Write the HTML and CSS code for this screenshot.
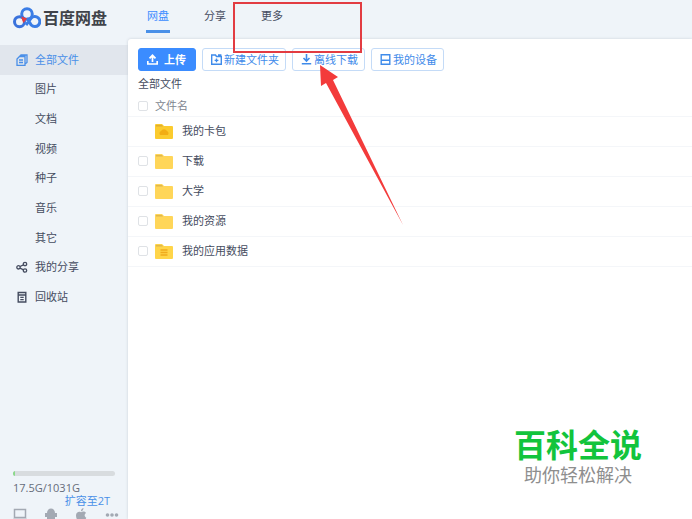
FILE: index.html
```html
<!DOCTYPE html>
<html lang="zh-CN">
<head>
    <meta charset="UTF-8">
    <title>百度网盘</title>
    <link rel="stylesheet" href="styles.css">
</head>
<body>
    <header class="topbar">
        <div class="brand">
            <svg class="brand-icon" viewBox="0 0 28 22" fill="none">
                <circle cx="14" cy="7" r="5.3" stroke="#3a7de6" stroke-width="3"/>
                <circle cx="6.5" cy="14.7" r="5" stroke="#3a72dc" stroke-width="3"/>
                <path d="M14 11L18.2 18A5 5 0 1 0 18 11.4L13 18" stroke="#3a7de6" stroke-width="3"/>
                <path d="M8.5 9.5L14 11.5L10.5 16C9.500 14 8.500 12 8.500 9.500Z" fill="#e63c42"/>
            </svg>
            <span>百度网盘</span>
        </div>
        <nav class="tabs">
            <a class="tab active" href="#">网盘</a>
            <a class="tab" href="#">分享</a>
            <a class="tab" href="#">更多</a>
        </nav>
    </header>

    <div class="layout">
        <aside class="sidebar">
            <nav class="menu">
                <a class="menu-item active" href="#">
                    <svg class="menu-icon" viewBox="0 0 12 12" fill="none" stroke="currentColor">
                        <path d="M3.500 2.500L5 1H11V8.500L9 10M3.500 2.500H9V11.300H1V5L3.500 2.500ZM3 6H7M3 8.500H7" stroke-width="1.300"/>
                    </svg>
                    <span>全部文件</span>
                </a>
                <a class="menu-item" href="#">图片</a>
                <a class="menu-item" href="#">文档</a>
                <a class="menu-item" href="#">视频</a>
                <a class="menu-item" href="#">种子</a>
                <a class="menu-item" href="#">音乐</a>
                <a class="menu-item" href="#">其它</a>
                <a class="menu-item" href="#">
                    <svg class="menu-icon" viewBox="0 0 12 12" fill="none" stroke="currentColor" stroke-width="1.300">
                        <circle cx="2.500" cy="6.300" r="1.700"/>
                        <circle cx="9" cy="3" r="1.700"/>
                        <circle cx="9" cy="9.500" r="1.700"/>
                        <path d="M4 5.500L7.500 3.800M4 7.200L7.500 8.800"/>
                    </svg>
                    <span>我的分享</span>
                </a>
                <a class="menu-item" href="#">
                    <svg class="menu-icon" viewBox="0 0 12 12" fill="none" stroke="currentColor" stroke-width="1.400">
                        <path d="M1.500 1.500H10.500M2.200 4H9.800V11H2.200ZM2.200 1.500V4M9.800 1.500V4M4.300 6.400H7.700M4.300 8.600H7.700"/>
                    </svg>
                    <span>回收站</span>
                </a>
            </nav>

            <div class="quota">
                <div class="quota-bar"><div class="quota-used"></div></div>
                <div class="quota-text">17.5G/1031G</div>
                <a class="quota-link" href="#">扩容至2T</a>
                <div class="clients">
                    <svg viewBox="0 0 14 14" fill="none" stroke="#a3a9b3" stroke-width="1.500">
                        <path d="M1.500 1.500H12.500V9.500H1.500ZM0 11.500H14"/>
                    </svg>
                    <svg viewBox="0 0 14 14" fill="#a3a9b3">
                        <path d="M3 5A4 4.500 0 0 1 11 5H13V9H11V11H9V14H8V11H6V14H5V11H3V9H1V5Z"/>
                    </svg>
                    <svg viewBox="0 0 14 14" fill="#a3a9b3">
                        <path d="M9.500 0C9.500 2 8.500 3.200 7 3.200C7 1.500 8 .3 9.500 0ZM7 4.200C8.500 3.200 11 3.300 12 5C10 6.500 10.300 8.500 12.300 9.700C11 13 9.500 13.800 7 13C4 14 2 11 2 7.500C2 4 5 3.200 7 4.200Z"/>
                    </svg>
                    <svg viewBox="0 0 14 14" fill="#a3a9b3">
                        <circle cx="2.500" cy="7" r="1.800"/>
                        <circle cx="7" cy="7" r="1.800"/>
                        <circle cx="11.500" cy="7" r="1.800"/>
                    </svg>
                </div>
            </div>
        </aside>

        <main class="content">
            <div class="toolbar">
                <button class="btn btn-primary" type="button">
                    <svg viewBox="0 0 11 11" fill="none" stroke="currentColor" stroke-width="1.700">
                        <path d="M5.500 8V2M2.500 4.300L5.500 1.300L8.500 4.300M.8 7V10H10.200V7"/>
                    </svg>
                    <span>上传</span>
                </button>
                <button class="btn" type="button">
                    <svg viewBox="0 0 11 11" fill="none" stroke="currentColor" stroke-width="1.400">
                        <path d="M.7 1H4.500L5.500 2.500H10.300V10.200H.7ZM7 1H10.400M5.500 4.500V8.300M3.600 6.400H7.400"/>
                    </svg>
                    <span>新建文件夹</span>
                </button>
                <button class="btn" type="button">
                    <svg viewBox="0 0 11 11" fill="none" stroke="currentColor" stroke-width="1.600">
                        <path d="M5.500 0V7M2.500 4L5.500 7L8.500 4M.8 9.700H10.200"/>
                    </svg>
                    <span>离线下载</span>
                </button>
                <button class="btn" type="button">
                    <svg viewBox="0 0 11 11" fill="none" stroke="currentColor" stroke-width="1.400">
                        <path d="M1.200 .8H9.800V10.200H1.200ZM1.200 6.300H9.800"/>
                    </svg>
                    <span>我的设备</span>
                </button>
            </div>

            <div class="crumb">全部文件</div>

            <table class="files">
                <thead>
                    <tr>
                        <th class="check"><input type="checkbox" aria-label="全选"></th>
                        <th colspan="2">文件名</th>
                    </tr>
                </thead>
                <tbody>
                    <tr>
                        <td class="check"></td>
                        <td class="icon">
                            <svg class="folder" viewBox="0 0 18 15">
                                <path d="M0 1Q0 0 1 0H7L9 2H17Q18 2 18 3V14Q18 15 17 15H1Q0 15 0 14Z" fill="#fbcb2e"/>
                                <path d="M1 1H7L8 2.500H1Z" fill="#dfae33"/>
                                <path d="M5 11A3 3 0 0 1 6 7A3.500 3.500 0 0 1 12 7A3 3 0 0 1 13 11Z" fill="#f2ad13"/>
                            </svg>
                        </td>
                        <td>我的卡包</td>
                    </tr>
                    <tr>
                        <td class="check"><input type="checkbox" aria-label="下载"></td>
                        <td class="icon">
                            <svg class="folder" viewBox="0 0 18 15">
                                <path d="M0 1Q0 0 1 0H7L9 2H17Q18 2 18 3V14Q18 15 17 15H1Q0 15 0 14Z" fill="#ffd659"/>
                                <path d="M1 1H7L8 2.500H1Z" fill="#e0b84e"/>
                            </svg>
                        </td>
                        <td>下载</td>
                    </tr>
                    <tr>
                        <td class="check"><input type="checkbox" aria-label="大学"></td>
                        <td class="icon">
                            <svg class="folder" viewBox="0 0 18 15">
                                <path d="M0 1Q0 0 1 0H7L9 2H17Q18 2 18 3V14Q18 15 17 15H1Q0 15 0 14Z" fill="#ffd659"/>
                                <path d="M1 1H7L8 2.500H1Z" fill="#e0b84e"/>
                            </svg>
                        </td>
                        <td>大学</td>
                    </tr>
                    <tr>
                        <td class="check"><input type="checkbox" aria-label="我的资源"></td>
                        <td class="icon">
                            <svg class="folder" viewBox="0 0 18 15">
                                <path d="M0 1Q0 0 1 0H7L9 2H17Q18 2 18 3V14Q18 15 17 15H1Q0 15 0 14Z" fill="#ffd659"/>
                                <path d="M1 1H7L8 2.500H1Z" fill="#e0b84e"/>
                            </svg>
                        </td>
                        <td>我的资源</td>
                    </tr>
                    <tr>
                        <td class="check"><input type="checkbox" aria-label="我的应用数据"></td>
                        <td class="icon">
                            <svg class="folder" viewBox="0 0 18 15">
                                <path d="M0 1Q0 0 1 0H7L9 2H17Q18 2 18 3V14Q18 15 17 15H1Q0 15 0 14Z" fill="#ffd549"/>
                                <path d="M1 1H7L8 2.500H1Z" fill="#e0b84e"/>
                                <path d="M5.500 6H12.500M5.500 8.500H12.500M5.500 11H12.500" stroke="#f0aa1c" stroke-width="1.500"/>
                            </svg>
                        </td>
                        <td>我的应用数据</td>
                    </tr>
                </tbody>
            </table>
        </main>
    </div>

    <!-- annotations drawn over the window -->
    <div class="mark-box"></div>
    <svg class="mark-arrow" viewBox="0 0 84 161">
        <path d="M0 0L18 12L13 15L83 160L6 18L1 21Z" fill="#f33b3b"/>
    </svg>
    <div class="stamp">
        <div class="stamp-title">百科全说</div>
        <div class="stamp-text">助你轻松解决</div>
    </div>
</body>
</html>
```
FILE: styles.css
```css
* {
    box-sizing: border-box;
}

body {
    margin: 0;
    height: 100vh;
    overflow: hidden;
    position: relative;
    display: flex;
    flex-direction: column;
    background-color: #eff4f9;
    color: #454c60;
    font-family: "Open Sans", "Noto Sans CJK SC", sans-serif;
    font-size: 11px;
    line-height: 16px;
}

a {
    color: inherit;
    text-decoration: none;
}

/* top bar */
.topbar {
    display: flex;
    height: 39px;
    flex-shrink: 0;
}

.brand {
    display: flex;
    align-items: center;
    gap: 2px;
    width: 146px;
    padding: 0 0 4px 13px;
    font-size: 16px;
    font-weight: bold;
    color: #40434a;
}

.brand-icon {
    width: 28px;
    height: 22px;
}

.tabs {
    display: flex;
    gap: 33px;
    align-items: flex-start;
}

.tab {
    height: 33px;
    padding: 8px 1px 0;
    border-bottom: 3px solid transparent;
}

.tab.active {
    color: #3b8cff;
    border-bottom-color: #4a90e8;
}

/* layout */
.layout {
    display: flex;
    flex: 1;
    min-height: 0;
}

.sidebar {
    width: 128px;
    flex-shrink: 0;
    padding-top: 6px;
    display: flex;
    flex-direction: column;
}

.menu {
    display: grid;
    grid-auto-rows: 1fr;
    min-height: 267px;
}

.menu-item {
    display: flex;
    align-items: center;
    padding-left: 35px;
}

.menu-item.active {
    background-color: #e1e6ed;
    color: #4a8fe8;
}

.menu-icon {
    width: 12px;
    height: 12px;
    margin-left: -19px;
    margin-right: 7px;
}

.quota {
    margin-top: auto;
    padding: 0 13px;
    display: flex;
    flex-direction: column;
}

.quota-bar {
    height: 5px;
    margin-bottom: 4px;
    border-radius: 3px;
    background-color: #d8dcdf;
    overflow: hidden;
}

.quota-used {
    width: 2%;
    height: 100%;
    background-color: #8ad98a;
}

.quota-text {
    height: 13px;
    color: #666c7a;
}

.quota-link {
    align-self: flex-end;
    margin-right: 5px;
    line-height: 15px;
    color: #4a90e8;
}

.clients {
    display: flex;
    justify-content: space-between;
    height: 11px;
    margin-right: -4px;
    overflow: hidden;
}

.clients svg {
    width: 14px;
    height: 14px;
}

/* content */
.content {
    flex: 1;
    padding-top: 9px;
    background-color: #fff;
    border-top-left-radius: 3px;
    box-shadow: 0 0 3px #c9d0d8;
}

.toolbar {
    display: flex;
    gap: 6px;
    padding-left: 10px;
}

.btn {
    display: flex;
    align-items: center;
    gap: 2px;
    height: 23px;
    padding: 0 6px 0 8px;
    border: 1px solid #c4dbf7;
    border-radius: 3px;
    background-color: #fff;
    color: #3f8bea;
    font: inherit;
    cursor: pointer;
}

.btn svg {
    width: 11px;
    height: 11px;
}

.btn-primary {
    gap: 6px;
    padding: 0 9px 0 8px;
    border-color: #3b8cff;
    background-color: #3b8cff;
    color: #fff;
    font-weight: bold;
}

.crumb {
    padding: 5px 10px 4px;
}

.files {
    width: 100%;
    border-collapse: collapse;
}

.files th,
.files td {
    height: 30px;
    padding: 0;
    text-align: left;
    font-weight: normal;
    border-bottom: 1px solid #f4f6f9;
}

.files th {
    height: 20px;
    color: #80858f;
}

.files .check {
    width: 27px;
    padding-left: 10px;
}

.files .icon {
    width: 27px;
}

.files input {
    appearance: none;
    display: block;
    width: 10px;
    height: 10px;
    margin: 0;
    border: 1px solid #dfe2e6;
    border-radius: 2px;
}

.folder {
    display: block;
    width: 18px;
    height: 15px;
}

/* annotations */
.mark-box {
    position: absolute;
    left: 233px;
    top: 2px;
    width: 129px;
    height: 51px;
    border: 2px solid #e23c42;
}

.mark-arrow {
    position: absolute;
    left: 320px;
    top: 65px;
    width: 84px;
    height: 161px;
}

.stamp {
    position: absolute;
    right: 50px;
    bottom: 32px;
    text-align: center;
}

.stamp-title {
    font-size: 32px;
    line-height: 36px;
    font-weight: bold;
    color: #12c43c;
}

.stamp-text {
    font-size: 18px;
    line-height: 24px;
    color: #8e8e8e;
}
```
